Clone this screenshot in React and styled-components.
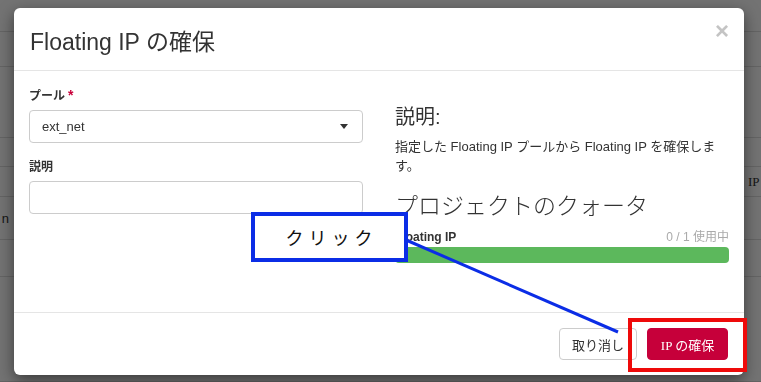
import React from "react";
import styled, { createGlobalStyle } from "styled-components";

const GlobalStyle = createGlobalStyle`
  html, body {
    margin: 0;
    padding: 0;
    width: 761px;
    height: 382px;
    overflow: hidden;
    background: #fff;
    font-family: "Liberation Sans", "Noto Sans CJK JP", sans-serif;
    color: #333;
  }
`;

const rows = [
  { h: 32 },
  { h: 35 },
  { h: 71 },
  { h: 29 },
  { h: 30, right: "IP" },
  { h: 43, left: "n" },
  { h: 37 },
  { h: 105 },
];

const Page = styled.div`
  width: 761px;
  height: 382px;
  display: flex;
  flex-direction: column;
`;

const BgRow = styled.div`
  height: ${(p) => p.$h}px;
  border-bottom: 1px solid #ddd;
  box-sizing: border-box;
  display: flex;
  align-items: center;
  justify-content: space-between;
  font-size: 13px;
  color: #333;
`;

const BgLeft = styled.span`
  width: 9px;
  overflow: hidden;
  direction: rtl;
  white-space: nowrap;
`;

const BgRight = styled.span`
  width: 13px;
  overflow: hidden;
  white-space: nowrap;
  font-family: "Liberation Serif", serif;
`;

const Backdrop = styled.div`
  position: fixed;
  inset: 0;
  background: rgba(0, 0, 0, 0.55);
`;

const Modal = styled.div`
  position: absolute;
  left: 14px;
  top: 8px;
  width: 730px;
  background: #fff;
  border-radius: 6px;
  box-shadow: 0 5px 15px rgba(0, 0, 0, 0.5);
  display: flex;
  flex-direction: column;
`;

const Header = styled.div`
  height: 63px;
  box-sizing: border-box;
  padding: 0 16px;
  border-bottom: 1px solid #e5e5e5;
  display: flex;
  align-items: center;
  justify-content: space-between;
`;

const Title = styled.h4`
  margin: 0;
  font-size: 23px;
  font-weight: 400;
  color: #333;
  padding-top: 2px;
`;

const Close = styled.span`
  font-size: 24px;
  font-weight: 700;
  color: #c4c4c4;
  line-height: 1;
  margin-top: -16px;
  margin-right: -1px;
`;

const Body = styled.div`
  min-height: 241px;
  box-sizing: border-box;
  padding: 15px 15px;
  display: grid;
  grid-template-columns: 334px 334px;
  column-gap: 32px;
  align-items: start;
`;

const Group = styled.div`
  margin-bottom: 15px;
`;

const Label = styled.label`
  display: block;
  font-size: 12px;
  font-weight: 700;
  line-height: 18px;
  margin-bottom: 5px;
  color: #333;
`;

const Required = styled.span`
  color: #c8003a;
  margin-left: 3px;
  font-size: 14px;
`;

const Select = styled.div`
  height: 33px;
  box-sizing: border-box;
  border: 1px solid #ccc;
  border-radius: 4px;
  padding: 0 14px 0 12px;
  display: flex;
  align-items: center;
  justify-content: space-between;
  font-size: 13px;
  color: #333;
`;

const Caret = styled.span`
  width: 0;
  height: 0;
  border-left: 4px solid transparent;
  border-right: 4px solid transparent;
  border-top: 5px solid #333;
`;

const Input = styled.div`
  height: 33px;
  box-sizing: border-box;
  border: 1px solid #ccc;
  border-radius: 4px;
`;

const SideHeading = styled.h3`
  margin: 18px 0 0;
  font-size: 20px;
  font-weight: 400;
  line-height: 26px;
  color: #333;
`;

const Help = styled.p`
  margin: 7px 0 0;
  font-size: 13px;
  line-height: 19px;
  color: #333;
`;

const QuotaHeading = styled.h3`
  margin: 16px 0 0;
  font-size: 23px;
  font-weight: 300;
  line-height: 31px;
  color: #333;
`;

const QuotaRow = styled.div`
  margin-top: 7px;
  display: flex;
  justify-content: space-between;
  font-size: 12px;
  line-height: 17px;
`;

const QuotaName = styled.span`
  font-weight: 700;
`;

const QuotaUse = styled.span`
  color: #aaa;
`;

const Bar = styled.div`
  margin-top: 1px;
  height: 16px;
  border-radius: 4px;
  background: #f5f5f5;
  overflow: hidden;
`;

const Fill = styled.div`
  height: 100%;
  background: #5cb85c;
`;

const Footer = styled.div`
  border-top: 1px solid #e5e5e5;
  padding: 15px 16px 15px;
  display: flex;
  justify-content: flex-end;
  gap: 10px;
`;

const Button = styled.button`
  height: 32px;
  box-sizing: border-box;
  border-radius: 4px;
  padding: 0 12px;
  font-size: 13px;
  font-family: ${(p) =>
    p.$primary
      ? `"Liberation Serif", "Noto Sans CJK JP", serif`
      : `"Liberation Sans", "Noto Sans CJK JP", sans-serif`};
  border: 1px solid ${(p) => (p.$primary ? "#c6003a" : "#ccc")};
  background: ${(p) => (p.$primary ? "#c6003a" : "#fff")};
  color: ${(p) => (p.$primary ? "#fff" : "#333")};
  min-width: ${(p) => (p.$primary ? "81px" : "77px")};
`;

const Callout = styled.div`
  position: absolute;
  left: 251px;
  top: 212px;
  width: 157px;
  height: 50px;
  box-sizing: border-box;
  border: 4px solid #0b2de6;
  background: #fff;
  display: flex;
  align-items: center;
  justify-content: center;
  padding-left: 4px;
  font-family: "Noto Sans CJK JP", sans-serif;
  font-size: 18px;
  font-weight: 400;
  letter-spacing: 5px;
  color: #111;
`;

const Highlight = styled.div`
  position: absolute;
  left: 628px;
  top: 318px;
  width: 119px;
  height: 54px;
  box-sizing: border-box;
  border: 4px solid #ee0a0a;
`;

const Pointer = styled.svg`
  position: absolute;
  left: 0;
  top: 0;
  pointer-events: none;
`;

export default function App() {
  const used = 1;
  return (
    <>
      <GlobalStyle />
      <Page>
        {rows.map((r, i) => (
          <BgRow key={i} $h={r.h}>
            <BgLeft>{r.left || ""}</BgLeft>
            <BgRight>{r.right || ""}</BgRight>
          </BgRow>
        ))}
      </Page>
      <Backdrop />
      <Modal>
        <Header>
          <Title>Floating IP の確保</Title>
          <Close>×</Close>
        </Header>
        <Body>
          <div>
            <Group>
              <Label>
                プール<Required>*</Required>
              </Label>
              <Select>
                ext_net
                <Caret />
              </Select>
            </Group>
            <Group>
              <Label>説明</Label>
              <Input />
            </Group>
          </div>
          <div>
            <SideHeading>説明:</SideHeading>
            <Help>
              指定した Floating IP プールから Floating IP を確保します。
            </Help>
            <QuotaHeading>プロジェクトのクォータ</QuotaHeading>
            <QuotaRow>
              <QuotaName>Floating IP</QuotaName>
              <QuotaUse>0 / 1 使用中</QuotaUse>
            </QuotaRow>
            <Bar>
              <Fill style={{ width: `${used * 100}%` }} />
            </Bar>
          </div>
        </Body>
        <Footer>
          <Button>取り消し</Button>
          <Button $primary>IP の確保</Button>
        </Footer>
      </Modal>
      <Pointer width="761" height="382">
        <line x1="406" y1="240" x2="618" y2="332" stroke="#0b2de6" strokeWidth="3" />
      </Pointer>
      <Callout>クリック</Callout>
      <Highlight />
    </>
  );
}
